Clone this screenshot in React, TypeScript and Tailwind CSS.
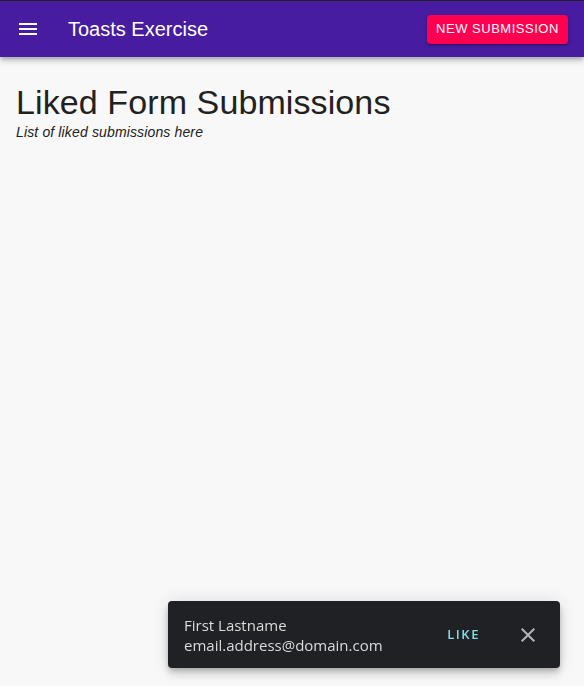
export default function App() {
  return (
    <div className="min-h-[686px] bg-[#f8f8f8] font-['Liberation_Sans',Arial,sans-serif]">
      <header className="border-t border-[#212121] bg-[#471ca0] shadow-[0_2px_4px_-1px_rgba(0,0,0,0.2),0_4px_5px_0_rgba(0,0,0,0.14),0_1px_10px_0_rgba(0,0,0,0.12)]">
        <div className="flex h-14 items-center pl-4 pr-4">
          <button className="-ml-3 mr-4 flex h-12 w-12 items-center justify-center text-white">
            <svg viewBox="0 0 24 24" width="24" height="24" fill="currentColor">
              <path d="M3 18h18v-2H3v2zm0-5h18v-2H3v2zm0-7v2h18V6H3z" />
            </svg>
          </button>
          <h1 className="flex-1 text-[20px] leading-[1.6] text-white">Toasts Exercise</h1>
          <button className="h-[29px] w-[141px] rounded bg-[#ff0050] text-[13px] tracking-[0.04em] text-white shadow-[0_3px_1px_-2px_rgba(0,0,0,0.2),0_2px_2px_0_rgba(0,0,0,0.14),0_1px_5px_0_rgba(0,0,0,0.12)]">
            NEW SUBMISSION
          </button>
        </div>
      </header>

      <main className="px-4 pt-[25px]">
        <h2 className="text-[34px] leading-[40px] tracking-[0.003em] text-[#212121]">Liked Form Submissions</h2>
        <p className="text-[14px] italic leading-[20px] tracking-[0.01em] text-[#212121]">List of liked submissions here</p>
      </main>

      <div className="fixed bottom-[18px] left-[168px] flex h-[67px] w-[392px] items-center rounded bg-[#202125] pl-4 pr-6 font-['Open_Sans',sans-serif] shadow-[0_3px_5px_-1px_rgba(0,0,0,0.2),0_6px_10px_0_rgba(0,0,0,0.14),0_1px_18px_0_rgba(0,0,0,0.12)]">
        <div className="flex-1 text-[15px] leading-[20px] text-[#dadada]">
          <div>First Lastname</div>
          <div>email.address@domain.com</div>
        </div>
        <button className="mr-[36px] text-[13px] font-semibold tracking-[0.12em] text-[#7fdee9]">LIKE</button>
        <button className="-mr-1 text-[#b5b5b5]">
          <svg viewBox="0 0 24 24" width="24" height="24" fill="currentColor">
            <path d="M19 6.41 17.59 5 12 10.59 6.41 5 5 6.41 10.59 12 5 17.59 6.41 19 12 13.41 17.59 19 19 17.59 13.41 12z" />
          </svg>
        </button>
      </div>
    </div>
  );
}
